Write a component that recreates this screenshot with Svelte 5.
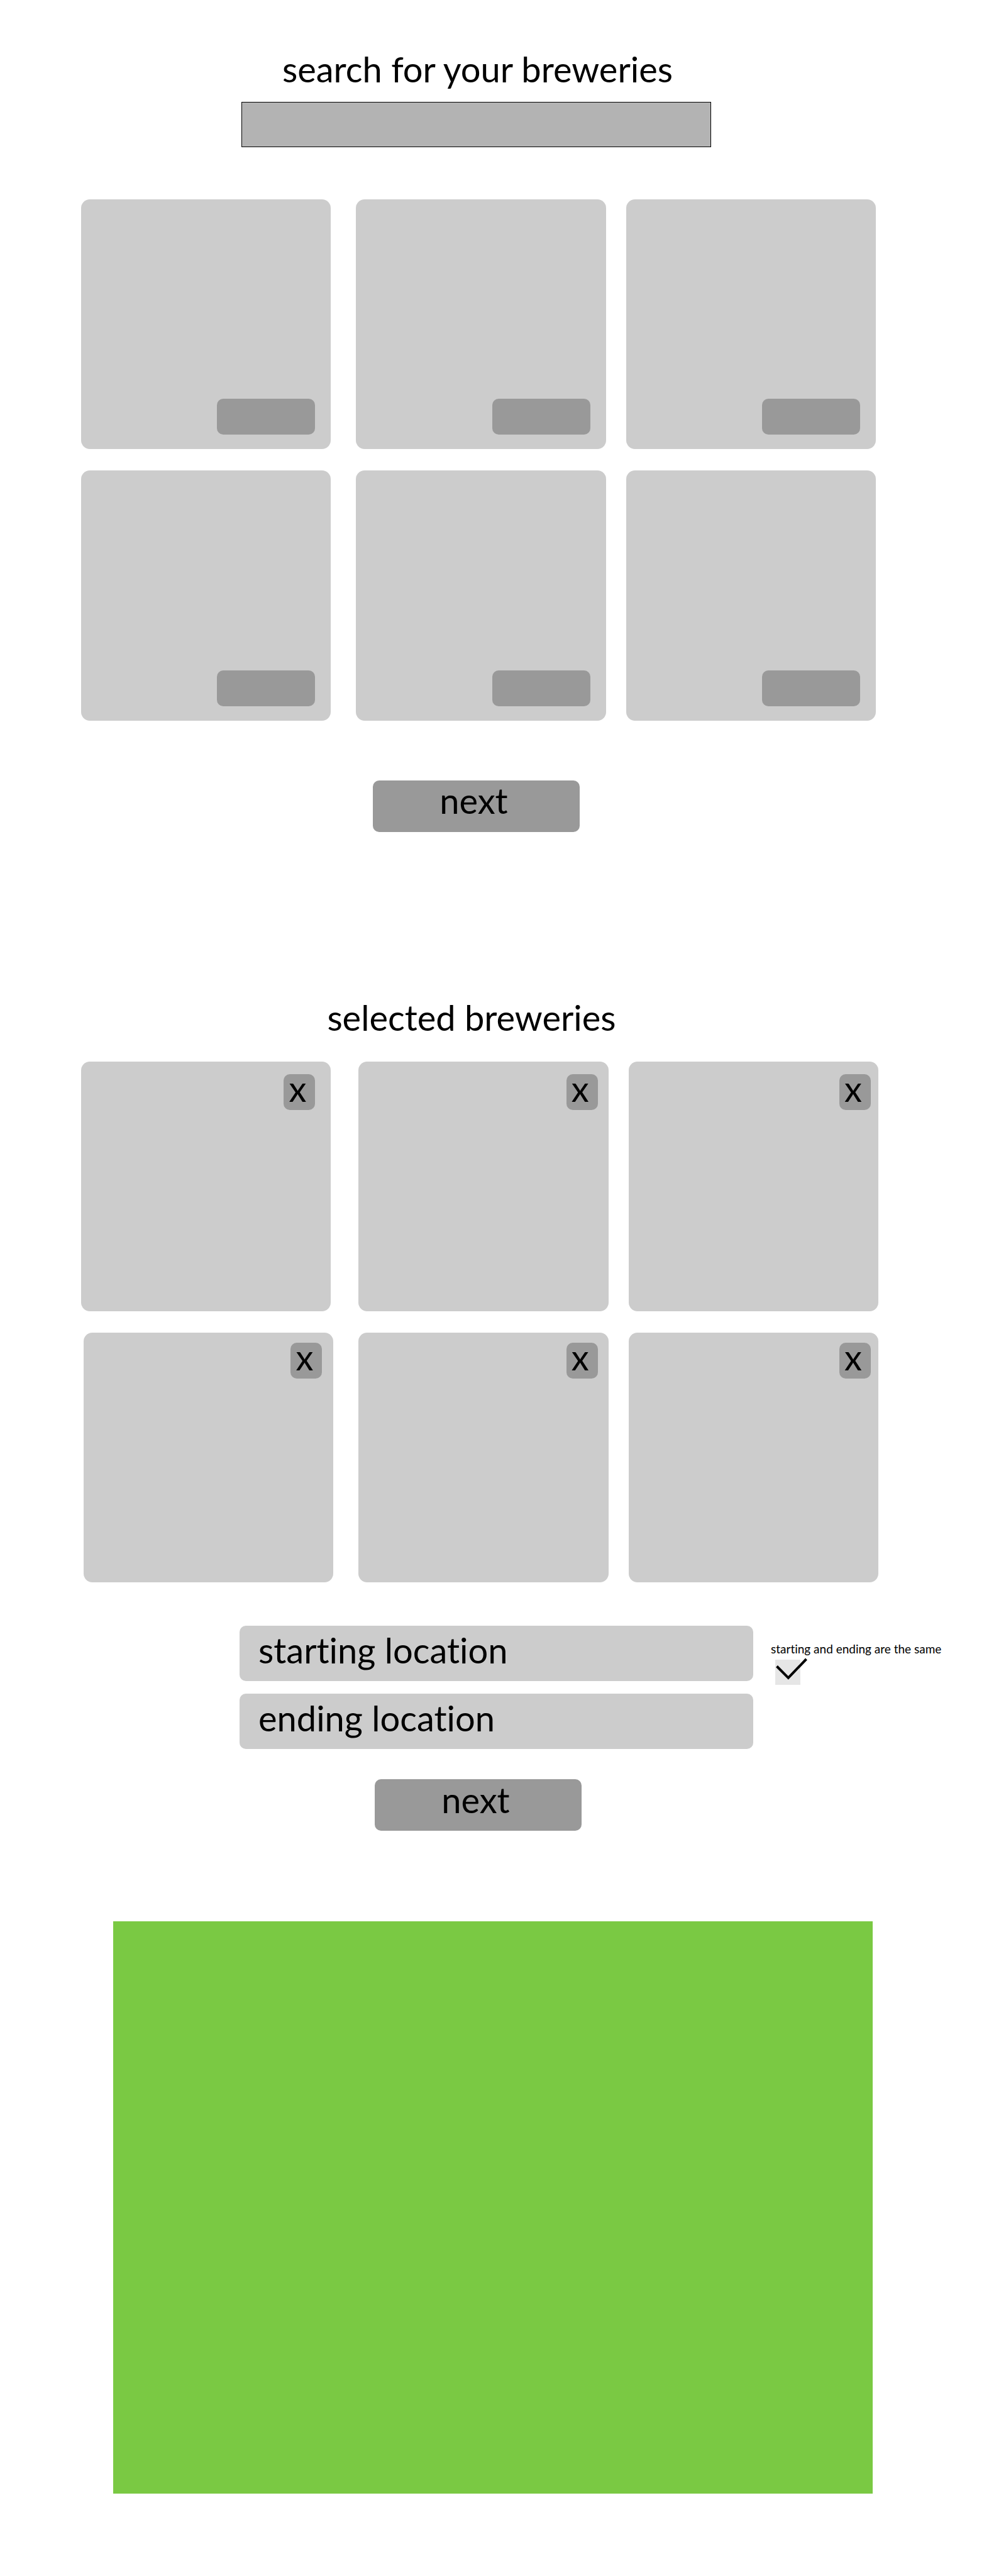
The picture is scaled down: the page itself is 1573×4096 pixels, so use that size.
<script>
  const results = [[1, 2, 3], [4, 5, 6]];
  const selected = [[1, 2, 3], [4, 5, 6]];

  let query = $state('');
  let start = $state('');
  let end = $state('');
  let sameLocation = $state(true);
</script>

<main>
  <section class="search">
    <h1><label for="search">search for your breweries</label></h1>
    <input id="search" class="search-box" type="text" bind:value={query} />
  </section>

  <section class="cards results" aria-label="results">
    {#each results as row}
      <div class="row">
        {#each row as id}
          <article class="card">
            <button class="add" type="button" aria-label="add brewery {id}"></button>
          </article>
        {/each}
      </div>
    {/each}
  </section>

  <div class="action">
    <button class="next" type="button">next</button>
  </div>

  <h2>selected breweries</h2>

  <section class="cards selected" aria-label="selected breweries">
    {#each selected as row}
      <div class="row">
        {#each row as id}
          <article class="card">
            <button class="remove" type="button">x</button>
          </article>
        {/each}
      </div>
    {/each}
  </section>

  <form>
    <div class="route">
      <div class="fields">
        <input type="text" aria-label="starting location" placeholder="starting location" bind:value={start} />
        <input type="text" aria-label="ending location" placeholder="ending location" bind:value={end} />
      </div>
      <div class="same">
        <label for="same">starting and ending are the same</label>
        <div class="tick">
          <input id="same" type="checkbox" bind:checked={sameLocation} />
          {#if sameLocation}
            <svg viewBox="0 0 40 40" aria-hidden="true">
              <path d="M2.5 10.5 L20.8 29 L49.5 -1" />
            </svg>
          {/if}
        </div>
      </div>
    </div>
    <div class="action form-action">
      <button class="next" type="button">next</button>
    </div>
  </form>

  <div class="map" role="img" aria-label="map"></div>
</main>

<style>
  :global(body) {
    margin: 0;
    background: #fff;
  }

  main {
    box-sizing: border-box;
    padding: 80px 0 132px;
    color: #000;
    font-family: Lato, 'Noto Sans', sans-serif;
    font-size: 56px;
    font-variant-ligatures: none;
    line-height: 60px;
  }

  h1,
  h2 {
    margin: 0;
    font-size: 56px;
    font-weight: 400;
    text-align: center;
  }

  h1 {
    padding-left: 4px;
  }

  h2 {
    padding: 265px 73px 40px 0;
  }

  button,
  input {
    box-sizing: border-box;
    margin: 0;
    border: 0;
    color: #000;
    font: inherit;
    font-variant-ligatures: none;
  }

  button {
    border-radius: 10px;
    background: #999;
    cursor: pointer;
  }

  .search {
    display: flex;
    flex-direction: column;
    align-items: center;
    gap: 22px;
    padding-right: 58px;
  }

  .search-box {
    width: 100%;
    max-width: 747px;
    height: 72px;
    padding: 0 28px;
    border: 1px solid #000;
    border-radius: 0;
    background: #b3b3b3;
  }

  .cards {
    display: flex;
    flex-direction: column;
    gap: 34px;
  }

  .results {
    padding: 83px 180px 0 129px;
  }

  .selected {
    padding: 0 176px 0 129px;
  }

  .row {
    display: grid;
    grid-template-columns: 397fr 40fr 397fr 32fr 397fr;
  }

  .selected .row:first-child {
    grid-template-columns: 397fr 44fr 397fr 32fr 397fr;
  }

  .selected .row:last-child {
    padding-left: 4px;
  }

  .card {
    box-sizing: border-box;
    display: flex;
    justify-content: flex-end;
    aspect-ratio: 1;
    border-radius: 14px;
    background: #ccc;
  }

  .card:nth-child(1) {
    grid-column: 1;
  }

  .card:nth-child(2) {
    grid-column: 3;
  }

  .card:nth-child(3) {
    grid-column: 5;
  }

  .results .card {
    align-items: flex-end;
    padding: 0 25px 23px 0;
  }

  .selected .card {
    align-items: flex-start;
    padding: 20px 25px 0 0;
  }

  .selected .row:last-child .card {
    padding-top: 16px;
    padding-right: 18px;
  }

  .selected .row .card:nth-child(2) {
    padding-right: 17px;
  }

  .selected .row .card:nth-child(3) {
    padding-right: 12px;
  }

  .add {
    width: 156px;
    height: 57px;
  }

  .remove {
    width: 50px;
    height: 57px;
    padding: 0 6px 12px 0;
    line-height: 45px;
  }

  .action {
    display: flex;
    justify-content: center;
    padding: 95px 58px 0 0;
  }

  .form-action {
    padding: 48px 52px 0 0;
  }

  .next {
    width: 329px;
    height: 82px;
    padding: 0 8px 17px 0;
  }

  .route {
    display: flex;
    gap: 28px;
    padding: 69px 77px 0 381px;
  }

  .fields {
    flex: 1;
    display: flex;
    flex-direction: column;
    gap: 20px;
    min-width: 0;
  }

  .fields input {
    width: 100%;
    height: 88px;
    padding: 0 30px 12px;
    border-radius: 10px;
    background: #ccc;
  }

  .fields input::placeholder {
    color: #000;
    opacity: 1;
  }

  .same {
    flex: 0 0 270px;
    display: flex;
    flex-direction: column;
    gap: 7px;
    min-width: 0;
    padding-top: 27px;
    font-size: 19px;
    line-height: 20px;
    white-space: nowrap;
  }

  .tick {
    position: relative;
    width: 40px;
    height: 40px;
    margin-left: 7px;
  }

  .tick input {
    display: block;
    width: 40px;
    height: 40px;
    appearance: none;
    background: #e6e6e6;
  }

  .tick svg {
    position: absolute;
    inset: 0;
    overflow: visible;
    pointer-events: none;
  }

  .tick path {
    fill: none;
    stroke: #000;
    stroke-width: 4;
  }

  .map {
    margin: 144px 185px 0 180px;
    aspect-ratio: 1208 / 910;
    background: #7ac943;
  }
</style>
